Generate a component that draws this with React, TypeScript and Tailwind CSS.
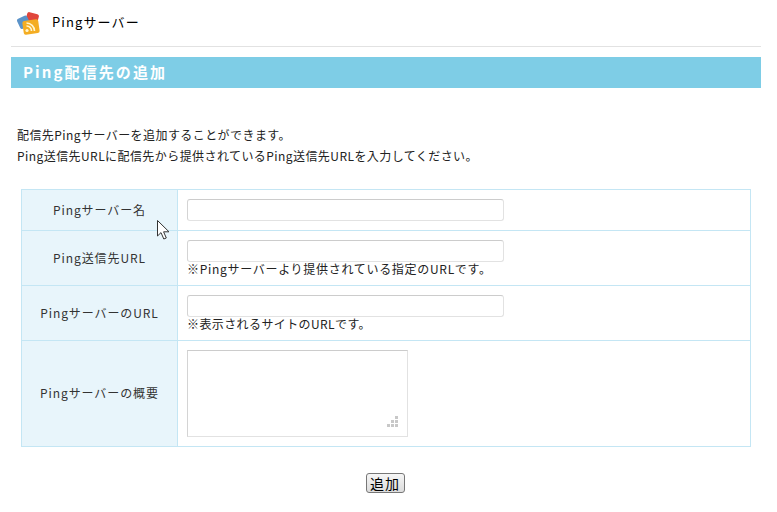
const font = { fontFamily: '"Noto Sans CJK JP", sans-serif' }

const Row = ({ label, h, children }: { label: string; h: string; children: React.ReactNode }) => (
  <div className={`flex border-b border-[#c4e6f4] last:border-b-0 ${h}`}>
    <div className="w-[156px] shrink-0 flex items-center justify-center pb-[1px] bg-[#e8f5fb] border-r border-[#c4e6f4] text-[12px] tracking-[0.9px] text-[#333]">
      {label}
    </div>
    <div className="flex-1 pl-[9px] pt-[9px]">{children}</div>
  </div>
)

const TextBox = () => (
  <div className="w-[317px] h-[22px] bg-white border border-[#e2e2e2] border-t-[#ccc] border-l-[#d4d4d4] rounded-[3px]" />
)

const Logo = () => (
  <svg className="mt-[3px]" width="24" height="24" viewBox="0 0 24 24">
    <rect x="9" y="1" width="12" height="12" rx="2" fill="#e0463c" transform="rotate(15 15 7)" />
    <rect x="1" y="5" width="11" height="11" rx="2" fill="#5b93c9" transform="rotate(-25 6 10)" />
    <rect x="6" y="8" width="16" height="14" rx="2" fill="#f4ad22" transform="rotate(-8 14 15)" />
    <circle cx="10" cy="18.5" r="1.6" fill="#fff6d0" />
    <path d="M9.5 14a4.8 4.8 0 0 1 5 5M9.5 11a8 8 0 0 1 8 8" fill="none" stroke="#fff6d0" strokeWidth="1.6" />
  </svg>
)

const Cursor = () => (
  <svg className="absolute left-[156px] top-[219px]" width="15" height="22" viewBox="0 0 15 22">
    <path
      d="M1.5 1.5V17L5 13.6 7.8 20 10.3 19 7.6 12.8H13Z"
      fill="#fff"
      stroke="#333"
      strokeWidth="1"
      strokeLinejoin="round"
    />
  </svg>
)

const Grip = () => (
  <svg className="absolute right-[8px] bottom-[8px]" width="12" height="12" viewBox="0 0 12 12" fill="#c8c8c8">
    <rect x="8" y="0" width="3" height="3" />
    <rect x="4" y="4" width="3" height="3" />
    <rect x="8" y="4" width="3" height="3" />
    <rect x="0" y="8" width="3" height="3" />
    <rect x="4" y="8" width="3" height="3" />
    <rect x="8" y="8" width="3" height="3" />
  </svg>
)

export default function App() {
  return (
    <div className="w-[777px] h-[512px] bg-white overflow-hidden relative text-[#222]" style={font}>
      <div className="mx-[11px] mr-[16px]">
        <div className="h-[47px] flex items-center pl-[6px] pb-[2px] gap-[11px] border-b border-[#e2e2e2]">
          <Logo />
          <span className="text-[13px] tracking-[1.1px] text-black">Pingサーバー</span>
        </div>
        <div className="mt-[10px] h-[31px] bg-[#7ecde6] flex items-center pl-[12px] text-white font-bold text-[15px] tracking-[2.1px]">
          Ping配信先の追加
        </div>
        <div className="mt-[36px] pl-[6px] text-[12px] leading-[21px] tracking-[0.43px]">
          <p>配信先Pingサーバーを追加することができます。</p>
          <p>Ping送信先URLに配信先から提供されているPing送信先URLを入力してください。</p>
        </div>
        <div className="mt-[23px] ml-[10px] w-[730px] border border-[#c4e6f4]">
          <Row label="Pingサーバー名" h="h-[41px]">
            <TextBox />
          </Row>
          <Row label="Ping送信先URL" h="h-[55px]">
            <TextBox />
            <p className="text-[12px] leading-[13px] tracking-[0.7px]">※Pingサーバーより提供されている指定のURLです。</p>
          </Row>
          <Row label="PingサーバーのURL" h="h-[55px]">
            <TextBox />
            <p className="text-[12px] leading-[13px] tracking-[0.4px]">※表示されるサイトのURLです。</p>
          </Row>
          <Row label="Pingサーバーの概要" h="h-[105px]">
            <div className="relative w-[221px] h-[87px] border border-[#e2e2e2] border-t-[#ccc] border-l-[#d4d4d4] bg-white">
              <Grip />
            </div>
          </Row>
        </div>
        <div className="mt-[26px] flex justify-center pr-[2px]">
          <button className="w-[39px] h-[20px] border border-[#777] rounded-[3px] bg-gradient-to-b from-[#f6f6f6] to-[#dcdcdc] text-[14px] tracking-[1px] leading-none text-black">追加</button>
        </div>
      </div>
      <Cursor />
    </div>
  )
}
